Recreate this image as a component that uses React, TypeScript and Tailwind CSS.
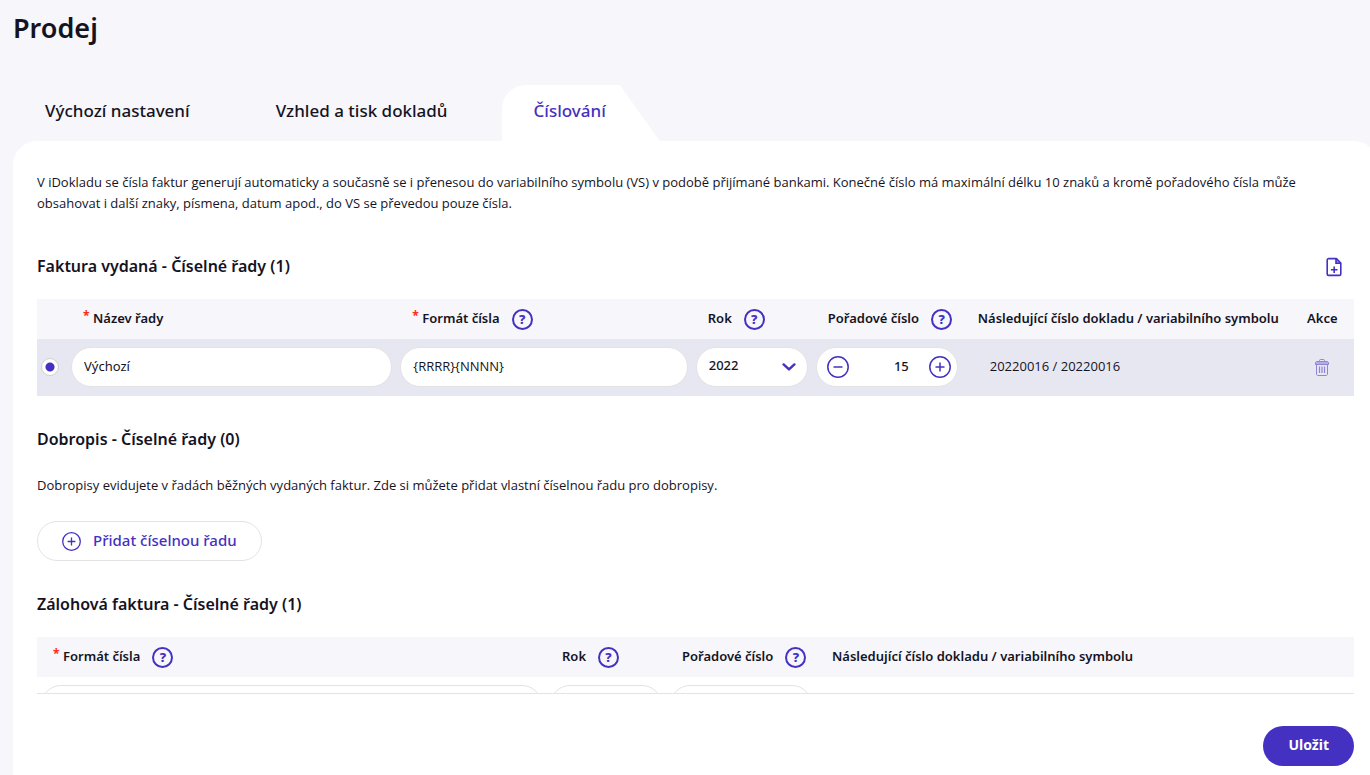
import { useState, type ReactNode } from "react";
import clsx from "clsx";

const tabs = ["Výchozí nastavení", "Vzhled a tisk dokladů", "Číslování"];

const field =
  "h-10 w-full rounded-full border border-[#e3e3e3] bg-white px-3 pb-0.5 text-[13px] text-[#15131f] outline-none";

function CirclePlus({ className }: { className?: string }) {
  return (
    <svg viewBox="0 0 22 22" fill="none" stroke="currentColor" strokeWidth="1.5" className={className} aria-hidden="true">
      <circle cx="11" cy="11" r="10.2" />
      <path d="M6.5 11h9M11 6.5v9" />
    </svg>
  );
}

function CircleMinus({ className }: { className?: string }) {
  return (
    <svg viewBox="0 0 22 22" fill="none" stroke="currentColor" strokeWidth="1.5" className={className} aria-hidden="true">
      <circle cx="11" cy="11" r="10.2" />
      <path d="M6.5 11h9" />
    </svg>
  );
}

function Chevron() {
  return (
    <svg
      viewBox="0 0 14 8"
      fill="none"
      stroke="currentColor"
      strokeWidth="2.4"
      strokeLinecap="round"
      strokeLinejoin="round"
      className="pointer-events-none absolute top-4 right-3 h-2 w-3.5 text-[#4431c1]"
      aria-hidden="true"
    >
      <path d="M1.6 1.4L7 6.4l5.4-5" />
    </svg>
  );
}

function FilePlus() {
  return (
    <svg viewBox="0 0 16 20" fill="none" stroke="currentColor" strokeWidth="1.6" className="h-5 w-4" aria-hidden="true">
      <path d="M10.4 1.6H2.6a1.4 1.4 0 0 0-1.4 1.4v14a1.4 1.4 0 0 0 1.4 1.4h10.8a1.4 1.4 0 0 0 1.4-1.4V6z" strokeLinejoin="round" />
      <path d="M10 1.8V6.2h4.6" fill="currentColor" fillOpacity="0.5" />
      <path d="M4.9 12.7h6.6M8.2 9.4v6.6" />
    </svg>
  );
}

function Trash() {
  return (
    <svg viewBox="0 0 14 17" fill="none" stroke="currentColor" className="h-[17px] w-3.5" aria-hidden="true">
      <path d="M4.5 2.4V1.5c0-.6.4-1 1-1h3c.6 0 1 .4 1 1v.9" />
      <path d="M1.5 2.5h11l1 1v2H.5v-2z" fill="currentColor" fillOpacity="0.6" />
      <path d="M1.5 5.5v9.5c0 .9.6 1.5 1.5 1.5h8c.9 0 1.5-.6 1.5-1.5V5.5" />
      <path d="M4.5 7.5v6.5M7 7.5v6.5M9.5 7.5v6.5" strokeWidth="1.2" />
    </svg>
  );
}

function Help({ label }: { label: string }) {
  return (
    <button
      type="button"
      aria-label={`Nápověda: ${label}`}
      className="mt-px flex size-[21px] items-center justify-center rounded-full border-2 border-[#4431c1] text-[13px] leading-none font-extrabold text-[#4431c1]"
    >
      ?
    </button>
  );
}

type HeadProps = { label: string; required?: boolean; help?: boolean; className?: string };

function Head({ label, required, help, className }: HeadProps) {
  return (
    <th scope="col" className={clsx("h-10 pl-4 text-left font-semibold whitespace-nowrap", className)}>
      <span className="flex items-center">
        {required && <span className="mb-1.5 w-2.5 text-xs leading-4 font-bold text-[#ff2a1a]">*</span>}
        {label}
        {help && (
          <span className="ml-3">
            <Help label={label} />
          </span>
        )}
      </span>
    </th>
  );
}

function YearSelect() {
  return (
    <div className="relative">
      <select aria-label="Rok" defaultValue="2022" className={clsx(field, "appearance-none font-medium")}>
        <option>2021</option>
        <option>2022</option>
        <option>2023</option>
      </select>
      <Chevron />
    </div>
  );
}

function Stepper({ initial }: { initial: number }) {
  const [value, setValue] = useState(initial);

  return (
    <div className="flex h-10 items-center rounded-full border border-[#e3e3e3] bg-white pr-1.5 pl-2.5 text-[#4431c1]">
      <button type="button" aria-label="Snížit" onClick={() => setValue(value - 1)}>
        <CircleMinus className="size-[22px]" />
      </button>
      <input
        aria-label="Pořadové číslo"
        inputMode="numeric"
        value={value}
        onChange={(e) => setValue(Number(e.target.value) || 0)}
        className="w-0 flex-1 pr-5 text-right text-[13px] font-medium text-[#15131f] outline-none"
      />
      <button type="button" aria-label="Zvýšit" onClick={() => setValue(value + 1)}>
        <CirclePlus className="size-[22px]" />
      </button>
    </div>
  );
}

function SectionTitle({ children }: { children: ReactNode }) {
  return <h2 className="text-base leading-6 font-semibold">{children}</h2>;
}

function Text({ className, children }: { className: string; children: ReactNode }) {
  return <p className={clsx("font-['Open_Sans',sans-serif] leading-[21px]", className)}>{children}</p>;
}

export default function App() {
  const [active, setActive] = useState(2);

  return (
    <div className="flex h-screen flex-col overflow-hidden bg-[#f6f6fb] pl-[13px] font-['Noto_Sans',sans-serif] text-[13px] text-[#15131f]">
      <h1 className="pt-2 text-[27px] leading-10 font-semibold">Prodej</h1>

      <nav className="mt-[37px] flex shrink-0" role="tablist">
        {tabs.map((tab, i) => (
          <button
            key={tab}
            type="button"
            role="tab"
            aria-selected={i === active}
            onClick={() => setActive(i)}
            className={clsx(
              "h-14 rounded-tl-3xl pr-[54px] pb-1 pl-8 text-[17px] font-medium whitespace-nowrap [clip-path:polygon(0_0,calc(100%-40px)_0,100%_100%,0_100%)]",
              i === active && "bg-white text-[#4431c1]"
            )}
          >
            {tab}
          </button>
        ))}
      </nav>

      <main className="-mr-2 flex min-h-0 flex-1 flex-col rounded-t-3xl bg-white pr-6 pl-6">
        <div className="min-h-0 flex-1 overflow-y-auto border-b border-[#e3e3e3] [scrollbar-width:none]">
          <Text className="mt-[31px]">
            V iDokladu se čísla faktur generují automaticky a současně se i přenesou do variabilního symbolu (VS) v
            podobě přijímané bankami. Konečné číslo má maximální délku 10 znaků a kromě pořadového čísla může obsahovat
            i další znaky, písmena, datum apod., do VS se převedou pouze čísla.
          </Text>

          <section className="mt-10">
            <div className="flex items-center justify-between pr-3">
              <SectionTitle>Faktura vydaná - Číselné řady (1)</SectionTitle>
              <button type="button" aria-label="Přidat řadu" className="pt-0.5 text-[#4431c1]">
                <FilePlus />
              </button>
            </div>
            <table className="mt-[21px] w-full table-fixed">
              <thead className="bg-[#f6f6fb]">
                <tr>
                  <td className="w-[30px]" />
                  <Head label="Název řady" required className="w-[25%]" />
                  <Head label="Formát čísla" required help />
                  <Head label="Rok" help className="w-[120px]" />
                  <Head label="Pořadové číslo" help className="w-[150px]" />
                  <Head label="Následující číslo dokladu / variabilního symbolu" className="w-[25%]" />
                  <Head label="Akce" className="w-[63px]" />
                </tr>
              </thead>
              <tbody className="bg-[#e7e7f2]">
                <tr className="border-b border-[#e7e7f2]">
                  <td className="pl-1">
                    <input
                      type="radio"
                      name="default-row"
                      aria-label="Výchozí řada"
                      defaultChecked
                      className="block size-[18px] appearance-none rounded-full border border-[#cfcfcf] bg-white checked:bg-[radial-gradient(circle,#4431c1_4px,white_5px)]"
                    />
                  </td>
                  <td className="px-1 py-2">
                    <input aria-label="Název řady" defaultValue="Výchozí" className={field} />
                  </td>
                  <td className="px-1 py-2">
                    <input
                      aria-label="Formát čísla"
                      defaultValue="{RRRR}{NNNN}"
                      className={clsx(field, "font-['Open_Sans',sans-serif]")}
                    />
                  </td>
                  <td className="px-1 py-2">
                    <YearSelect />
                  </td>
                  <td className="px-1 py-2">
                    <Stepper initial={15} />
                  </td>
                  <td className="pl-7 font-['Open_Sans',sans-serif]">20220016 / 20220016</td>
                  <td>
                    <button type="button" aria-label="Smazat" className="ml-6 block text-[#8f85d8]">
                      <Trash />
                    </button>
                  </td>
                </tr>
              </tbody>
            </table>
          </section>

          <section className="mt-[31px]">
            <SectionTitle>Dobropis - Číselné řady (0)</SectionTitle>
            <Text className="mt-6">
              Dobropisy evidujete v řadách běžných vydaných faktur. Zde si můžete přidat vlastní číselnou řadu pro
              dobropisy.
            </Text>
            <button
              type="button"
              className="mt-[25px] flex h-10 items-center gap-3 rounded-full border border-[#e3e3e3] px-6 text-[15px] font-medium text-[#4431c1]"
            >
              <CirclePlus className="size-[19px]" />
              <span className="pb-0.5">Přidat číselnou řadu</span>
            </button>
          </section>

          <section className="mt-[31px]">
            <SectionTitle>Zálohová faktura - Číselné řady (1)</SectionTitle>
            <table className="mt-[21px] w-full table-fixed">
              <thead className="bg-[#f6f6fb]">
                <tr>
                  <Head label="Formát čísla" required help className="w-[509px]" />
                  <Head label="Rok" help className="w-[120px]" />
                  <Head label="Pořadové číslo" help className="w-[150px]" />
                  <Head label="Následující číslo dokladu / variabilního symbolu" />
                </tr>
              </thead>
              <tbody>
                <tr>
                  <td className="px-1 py-2">
                    <input aria-label="Formát čísla" className={field} />
                  </td>
                  <td className="px-1 py-2">
                    <YearSelect />
                  </td>
                  <td className="px-1 py-2">
                    <Stepper initial={1} />
                  </td>
                  <td />
                </tr>
              </tbody>
            </table>
          </section>
        </div>

        <footer className="flex shrink-0 justify-end pt-8 pb-[9px]">
          <button type="button" className="h-10 rounded-full bg-[#4431c1] px-[25px] pb-0.5 text-sm font-bold text-white">
            Uložit
          </button>
        </footer>
      </main>
    </div>
  );
}
